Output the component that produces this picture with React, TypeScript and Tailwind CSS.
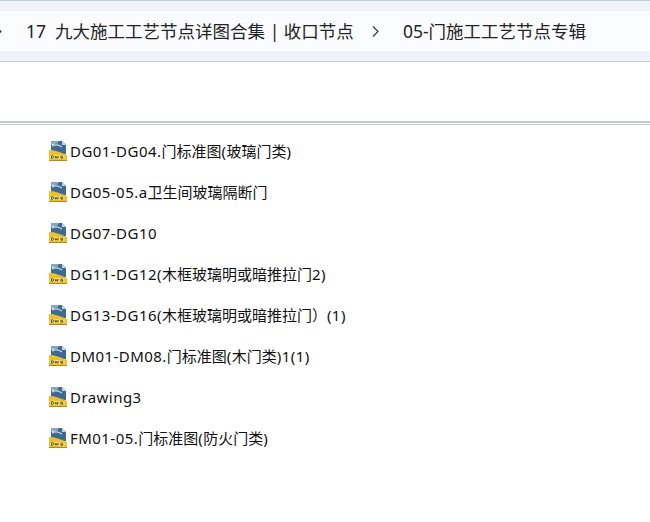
const files = [
  "DG01-DG04.门标准图(玻璃门类)",
  "DG05-05.a卫生间玻璃隔断门",
  "DG07-DG10",
  "DG11-DG12(木框玻璃明或暗推拉门2)",
  "DG13-DG16(木框玻璃明或暗推拉门）(1)",
  "DM01-DM08.门标准图(木门类)1(1)",
  "Drawing3",
  "FM01-05.门标准图(防火门类)",
];

function DwgIcon() {
  return (
    <svg width="18" height="20" viewBox="0 0 18 20" className="shrink-0">
      <path d="M2 0h11l4 4v9H2z" fill="#3d6a90" />
      <path d="M2 0h8l-2 3-6 1z" fill="#86a6c0" />
      <path d="M13 0l4 4h-4z" fill="#c3d4e2" />
      <path d="M3 4h6l4 2" stroke="#eef4f8" strokeWidth="1" fill="none" />
      <path d="M4 2.500v3" stroke="#eef4f8" strokeWidth="1" fill="none" />
      <path d="M0 9c6 0 11 2 18 5v6H0z" fill="#eec12a" />
      <path d="M0 19h18v1H0z" fill="#b58a10" />
      <path d="M1.500 14h11l3 1v3h-14z" fill="#f7e07a" />
      <path d="M2.500 14.800h1.500l1 1.200-1 1.300h-1.500zM6 14.800l.8 2.500.9-1.800.9 1.800.8-2.500M13.800 15.200h-2v2h2v-1h-.8" stroke="#2f2806" strokeWidth="0.7" fill="none" />
    </svg>
  );
}

// latin runs are spaced out a little, the CJK ones are not
function Label({ text, spacing }: { text: string; spacing: string }) {
  return (
    <span className="whitespace-pre">
      {text.split(/([\u4e00-\u9fff）]+)/).map((part, i) => (
        <span key={i} className={i % 2 === 0 ? spacing : ""}>
          {part}
        </span>
      ))}
    </span>
  );
}

function Chevron() {
  return (
    <svg width="7" height="11" viewBox="0 0 7 11" fill="none" stroke="#333" strokeWidth="1.100" className="shrink-0">
      <path d="M1 .5l5 5-5 5" />
    </svg>
  );
}

export default function App() {
  return (
    <div className="h-[522px] w-[650px] overflow-hidden bg-white font-['Noto_Sans','Noto_Sans_CJK_SC',sans-serif] text-[#111]">
      {/* address bar */}
      <div className="h-[62px] border-t border-b border-t-[#bdd0e2] border-b-[#c2ced9] bg-[#f0f4f9] pt-[10px]">
        <div className="flex h-[40px] items-center bg-[#fafcff] text-[17.5px] text-[#222]">
          <div className="ml-[-5px] mr-[24px] shrink-0">
            <Chevron />
          </div>
          <span className="whitespace-pre">17  九大施工工艺节点详图合集 | 收口节点</span>
          <div className="ml-[18px] mr-[24px] shrink-0">
            <Chevron />
          </div>
          <span>05-门施工工艺节点专辑</span>
        </div>
      </div>

      {/* toolbar */}
      <div className="h-[61px] border-b-[2px] border-[#c6c9cb]" />
      <div className="mt-[1px] h-[1px] bg-[#c6c9cb]" />

      {/* file list */}
      <ul className="flex flex-col gap-[21px] pl-[49px] pt-[16px]">
        {files.map((name) => (
          <li key={name} className="flex h-[20px] items-center gap-[3px] text-[15px] leading-[20px]">
            <DwgIcon />
            <div className="mt-[-1px]">
              <Label text={name} spacing="tracking-[0.45px]" />
            </div>
          </li>
        ))}
      </ul>
    </div>
  );
}
